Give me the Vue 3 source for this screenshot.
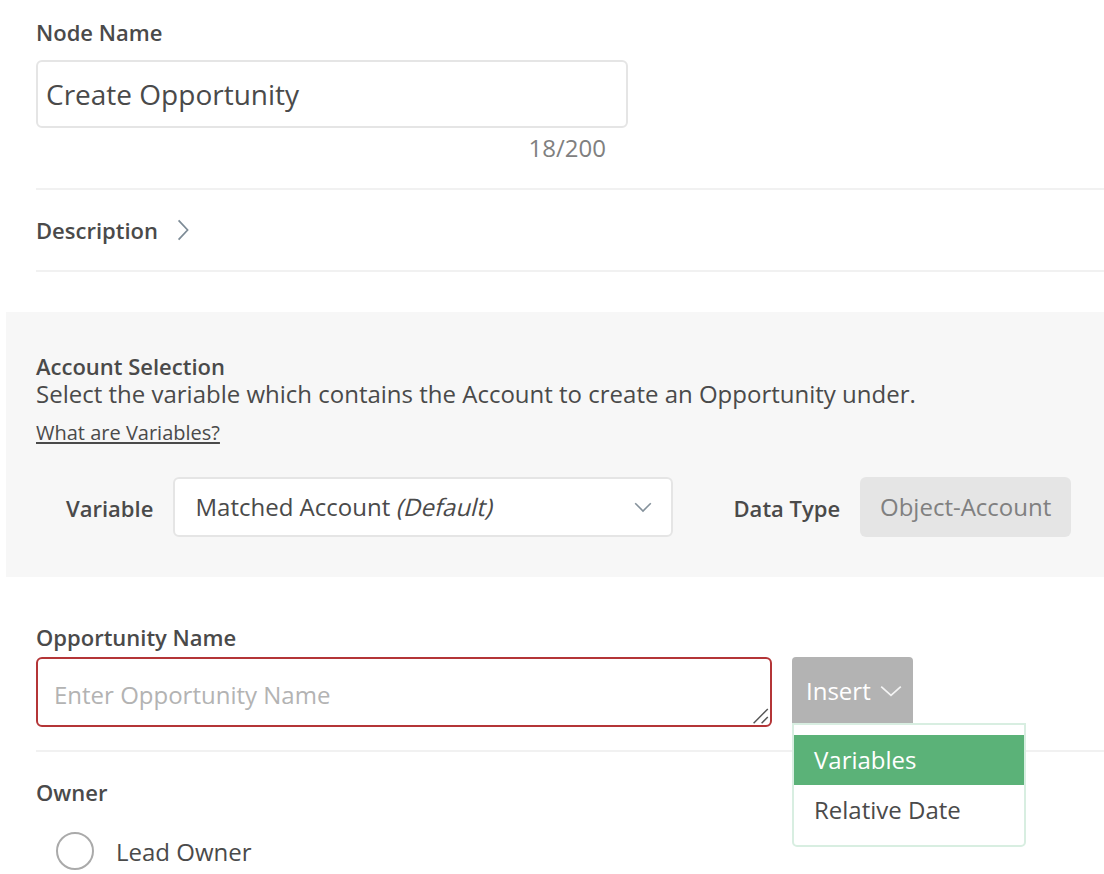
<script setup>
import { ref } from 'vue'

const nodeName = ref('Create Opportunity')
const opportunityName = ref('')
const insertOptions = ['Variables', 'Relative Date']
const activeOption = ref('Variables')
</script>

<template>
  <main class="form">
    <section class="node">
      <h2 class="label">Node Name</h2>
      <input v-model="nodeName" class="name-input" type="text" maxlength="200" />
      <div class="counter"><span>{{ nodeName.length }}/200</span></div>
    </section>

    <section class="description">
      <h2 class="label">Description</h2>
      <svg width="12" height="22" viewBox="0 0 12 22" fill="none">
        <path d="M1.6 1.4 10.6 11 1.6 20.6" stroke="#7d8b96" stroke-width="1.7" />
      </svg>
    </section>

    <section class="account">
      <h2 class="label">Account Selection</h2>
      <p class="help">Select the variable which contains the Account to create an Opportunity under.</p>
      <a class="link">What are Variables?</a>
      <div class="row">
        <span class="label variable-label">Variable</span>
        <div class="select">
          <span>Matched Account <em>(Default)</em></span>
          <svg width="18" height="12" viewBox="0 0 18 12" fill="none">
            <path d="M1.2 2.2 9 10 16.8 2.2" stroke="#84919b" stroke-width="1.6" />
          </svg>
        </div>
        <span class="label type-label">Data Type</span>
        <div class="type"><span>Object-Account</span></div>
      </div>
    </section>

    <section class="opportunity">
      <h2 class="label">Opportunity Name</h2>
      <div class="opportunity-row">
        <div class="field">
          <textarea v-model="opportunityName" placeholder="Enter Opportunity Name"></textarea>
          <svg class="grip" width="18" height="18" viewBox="0 0 18 18" fill="none">
            <path d="M1.6 16.2 15.8 2M9.6 16.2 15.8 10" stroke="#fff" stroke-width="4" />
            <path d="M1.6 16.2 15.8 2M9.6 16.2 15.8 10" stroke="#555" stroke-width="1.5" />
          </svg>
        </div>
        <div class="insert">
          <button class="insert-button">
            <span>Insert</span>
            <svg width="22" height="13" viewBox="0 0 22 13" fill="none">
              <path d="M1.2 1.7 11 10.4 20.8 1.7" stroke="#f4f4f4" stroke-width="1.7" />
            </svg>
          </button>
          <ul class="menu">
            <li
              v-for="option in insertOptions"
              :key="option"
              :class="{ active: option === activeOption }"
              @mouseenter="activeOption = option"
            ><span>{{ option }}</span></li>
          </ul>
        </div>
      </div>
    </section>

    <section class="owner">
      <h2 class="label">Owner</h2>
      <label class="radio">
        <span class="circle"></span>
        <span class="radio-text">Lead Owner</span>
      </label>
    </section>
  </main>
</template>

<style>
body {
  margin: 0;
  background: #fff;
  overflow: hidden;
}
</style>

<style scoped>
* {
  box-sizing: border-box;
}
.form {
  height: 874px;
  overflow: hidden;
  font-family: 'Open Sans', 'Noto Sans', sans-serif;
  font-size: 24px;
  line-height: 30px;
  color: #4a4a4a;
  white-space: nowrap;
}
.label {
  margin: 0;
  font-size: 22px;
  font-weight: 600;
  line-height: 30px;
}
.node {
  height: 190px;
  margin-left: 36px;
  padding-top: 17px;
  border-bottom: 2px solid #f1f1f1;
}
.name-input {
  display: block;
  width: 592px;
  height: 68px;
  margin-top: 13px;
  padding: 0 8px;
  border: 2px solid #e5e5e5;
  border-radius: 6px;
  outline: none;
  background: #fff;
  font: inherit;
  font-size: 28px;
  color: inherit;
}
.counter {
  width: 570px;
  margin-top: 5px;
  text-align: right;
  color: #808080;
}
.description {
  display: flex;
  align-items: center;
  gap: 19px;
  height: 82px;
  margin-left: 36px;
  border-bottom: 2px solid #f1f1f1;
}
.account {
  height: 265px;
  margin: 40px 0 0 6px;
  padding: 41px 0 0 30px;
  background: #f7f7f7;
}
.account > .label {
  line-height: 26px;
}
.help {
  margin: 0;
}
.link {
  display: block;
  margin-top: 9px;
  width: max-content;
  font-size: 20px;
  line-height: 30px;
  text-decoration: underline;
  text-decoration-thickness: 2px;
  text-underline-offset: 2px;
}
.row {
  display: flex;
  align-items: center;
  height: 60px;
  margin-top: 29px;
  padding-left: 30px;
}
.variable-label {
  width: 107px;
  padding-top: 2px;
}
.select {
  display: flex;
  align-items: center;
  justify-content: space-between;
  width: 500px;
  height: 60px;
  padding: 0 19px 0 20.5px;
  border: 2px solid #e5e5e5;
  border-radius: 6px;
  background: #fff;
}
/* Slanted upright letterforms rather than the italic face */
.select em {
  display: inline-block;
  font-style: normal;
  transform: skewX(-14deg);
  transform-origin: 0 77%;
}
.type-label {
  width: 126.5px;
  margin-left: 60.5px;
  padding-top: 2px;
}
.type {
  width: 211px;
  height: 60px;
  padding-left: 20px;
  border-radius: 6px;
  background: #e5e5e5;
  color: #808080;
  line-height: 60px;
}
.opportunity {
  height: 175px;
  margin-left: 36px;
  padding-top: 45px;
  border-bottom: 2px solid #f1f1f1;
}
.opportunity-row {
  display: flex;
  gap: 20px;
  margin-top: 5px;
}
.field {
  position: relative;
  width: 736px;
  height: 70px;
}
textarea {
  display: block;
  width: 100%;
  height: 100%;
  padding: 21px 16px 0;
  border: 2px solid #b43537;
  border-radius: 6px;
  outline: none;
  overflow: hidden;
  resize: none;
  background: #fff;
  font: inherit;
  color: inherit;
}
textarea::placeholder {
  color: #b3b3b3;
}
.grip {
  position: absolute;
  right: 2px;
  bottom: 2px;
}
.insert {
  position: relative;
  width: 121px;
}
.insert-button {
  display: flex;
  align-items: center;
  gap: 9px;
  width: 121px;
  height: 66px;
  padding: 2px 0 0 14px;
  border: 0;
  border-radius: 4px 4px 0 0;
  background: #b3b3b3;
  font: inherit;
  color: #fff;
}
.menu {
  position: absolute;
  top: 66px;
  left: 0;
  width: 234px;
  height: 124px;
  margin: 0;
  padding: 10px 0 0;
  border: 2px solid #d8eee1;
  border-radius: 0 0 5px 5px;
  background: #fff;
  list-style: none;
}
.menu li {
  height: 50px;
  padding-left: 20px;
  line-height: 50px;
}
.menu .active {
  background: #5bb278;
  color: #fff;
}
.owner {
  margin-left: 36px;
  padding-top: 25px;
}
.radio {
  display: flex;
  align-items: center;
  gap: 22px;
  height: 38px;
  margin: 25px 0 0 20px;
}
.radio-text {
  padding-top: 2px;
}
.circle {
  width: 38px;
  height: 38px;
  border: 2px solid #aaa;
  border-radius: 50%;
}
</style>
